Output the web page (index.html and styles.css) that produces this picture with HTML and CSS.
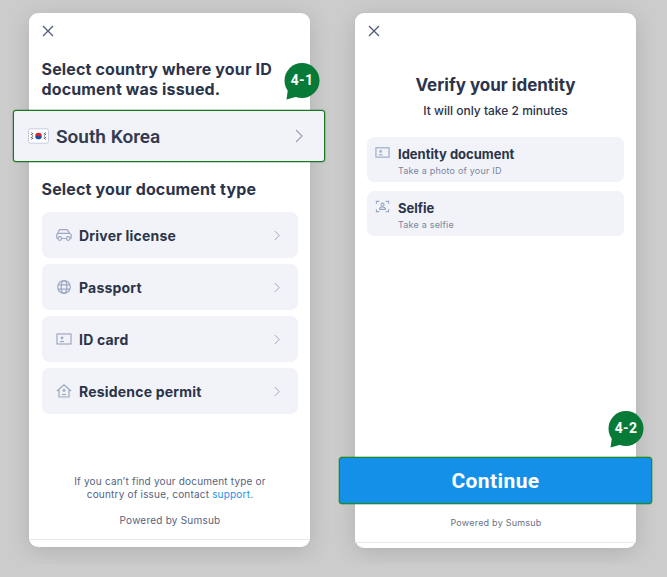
FILE: index.html
```html
<!DOCTYPE html>
<html lang="en">
<head>
    <meta charset="UTF-8">
    <meta name="viewport" content="width=device-width, initial-scale=1.0">
    <title>Verification steps</title>
    <link rel="stylesheet" href="styles.css">
</head>
<body>
    <main class="page">
        <section class="card card-left">
            <svg class="close" viewBox="0 0 12 12"><path d="M1 1l10 10M11 1L1 11"/></svg>
            <h2 class="heading">Select country where your ID document was issued.</h2>
            <div class="badge badge-one">
                <svg class="badge-shape" viewBox="0 0 36 37"><circle cx="18" cy="17.500" r="17.500"/><path d="M4 26L2.500 36.500 15 33z"/></svg>
                <span class="badge-text">4-1</span>
            </div>
            <div class="country">
                <svg class="flag" viewBox="0 0 22 16">
                    <rect x=".5" y=".5" width="21" height="15" rx="2" fill="#fff" stroke="#c3cbdc"/>
                    <path d="M7.500 8a3.500 3.500 0 0 1 7 0z" fill="#d8232f"/>
                    <path d="M7.500 8a3.500 3.500 0 0 0 7 0z" fill="#1c4fa0"/>
                    <path d="M3.500 4.500l2 1.500M3 6l2 1.500M16.500 6l2-1.500M17 7.500l2-1.500M3.500 11.500l2-1.500M3 10l2-1.500M16.500 10l2 1.500M17 8.500l2 1.500" stroke="#333a48" stroke-width=".9"/>
                </svg>
                <span class="country-name">South Korea</span>
                <svg class="chevron" viewBox="0 0 8 14"><path d="M1 1l6 6-6 6"/></svg>
            </div>
            <h2 class="heading heading-type">Select your document type</h2>
            <div class="doc-list">
                <div class="doc-row">
                    <svg class="icon" viewBox="0 0 16 16"><path d="M2 11.500H1.500C1 11.500.8 11.200.8 10.800V8c0-.8.4-1.300 1-1.600L3 3.500C3.200 3 3.700 2.700 4.200 2.700h6.300c.5 0 .9.200 1.200.6l2 3c.9.300 1.500.9 1.500 1.800v2.700c0 .4-.3.700-.7.700H14M5.600 11.500h4.800M2 6.300h12"/><circle cx="3.800" cy="11.500" r="1.800"/><circle cx="12.200" cy="11.500" r="1.800"/></svg>
                    <span class="doc-name">Driver license</span>
                    <svg class="chevron chevron-small" viewBox="0 0 8 14"><path d="M1 1l6 6-6 6"/></svg>
                </div>
                <div class="doc-row">
                    <svg class="icon" viewBox="0 0 16 16"><circle cx="8" cy="8" r="6.300"/><ellipse cx="8" cy="8" rx="2.800" ry="6.300"/><path d="M2 5.800h12M2 10.200h12"/></svg>
                    <span class="doc-name">Passport</span>
                    <svg class="chevron chevron-small" viewBox="0 0 8 14"><path d="M1 1l6 6-6 6"/></svg>
                </div>
                <div class="doc-row">
                    <svg class="icon" viewBox="0 0 16 16"><rect x="1" y="3" width="14" height="10"/><circle cx="6" cy="6.800" r=".8"/><path d="M4 10.500h4"/></svg>
                    <span class="doc-name">ID card</span>
                    <svg class="chevron chevron-small" viewBox="0 0 8 14"><path d="M1 1l6 6-6 6"/></svg>
                </div>
                <div class="doc-row">
                    <svg class="icon" viewBox="0 0 16 16"><path d="M1 8l7-6.200L15 8M3 6.500V14h10V6.500"/><circle cx="8" cy="7.500" r=".8"/><path d="M6 11.500h4"/></svg>
                    <span class="doc-name">Residence permit</span>
                    <svg class="chevron chevron-small" viewBox="0 0 8 14"><path d="M1 1l6 6-6 6"/></svg>
                </div>
            </div>
            <p class="help">If you can&rsquo;t find your document type or<br>country of issue, contact <a class="help-link">support</a>.</p>
            <p class="powered">Powered by Sumsub</p>
            <div class="card-foot"></div>
        </section>

        <section class="card card-right">
            <svg class="close" viewBox="0 0 12 12"><path d="M1 1l10 10M11 1L1 11"/></svg>
            <h1 class="title">Verify your identity</h1>
            <p class="subtitle">It will only take 2 minutes</p>
            <div class="step-list">
                <div class="step-row">
                    <svg class="icon icon-step" viewBox="0 0 16 16"><rect x="1" y="3" width="14" height="10"/><circle cx="6" cy="6.800" r=".8"/><path d="M4 10.500h4"/></svg>
                    <div>
                        <div class="step-name">Identity document</div>
                        <div class="step-note">Take a photo of your ID</div>
                    </div>
                </div>
                <div class="step-row">
                    <svg class="icon icon-step" viewBox="0 0 16 16"><path d="M1.500 5V2.500h3M11.500 2.500h3V5M14.500 11v2.500h-3M4.500 13.500h-3V11"/><circle cx="8" cy="6" r="1.600"/><path d="M4.800 11c0-1.700 1.400-2.500 3.200-2.500s3.200.8 3.200 2.500z"/></svg>
                    <div>
                        <div class="step-name">Selfie</div>
                        <div class="step-note">Take a selfie</div>
                    </div>
                </div>
            </div>
            <div class="badge badge-two">
                <svg class="badge-shape" viewBox="0 0 36 37"><circle cx="18" cy="17.500" r="17.500"/><path d="M4 26L2.500 36.500 15 33z"/></svg>
                <span class="badge-text">4-2</span>
            </div>
            <button class="continue">Continue</button>
            <p class="powered powered-right">Powered by Sumsub</p>
            <div class="card-foot card-foot-right"></div>
        </section>
    </main>
</body>
</html>
```

FILE: styles.css
```css
body {
    margin: 0;
    background-color: #cccccc;
    font-family: "Inter", "Liberation Sans", sans-serif;
    color: #2b344a;
}

.page {
    display: flex;
    gap: 45px;
    padding: 13px 0 0 29px;
    height: 564px;
    box-sizing: border-box;
}

.card {
    position: relative;
    display: flex;
    flex-direction: column;
    width: 281px;
    background-color: #fff;
    border-radius: 9px;
    box-shadow: 0 4px 22px rgba(0, 0, 0, 0.14);
    box-sizing: border-box;
}

.card-left {
    height: 534px;
    padding: 12px 12px 0;
}

.card-right {
    height: 535px;
    padding: 12px 12px 0;
}

.close {
    display: block;
    width: 12px;
    height: 12px;
    flex: none;
    fill: none;
    stroke: #4d5b78;
    stroke-width: 1.300;
    margin-left: 1px;
}

.heading {
    margin: 22px 0 0;
    padding-left: 0.5px;
    font-size: 16px;
    line-height: 20px;
    font-weight: 700;
    letter-spacing: 0.15px;
}

.heading-type {
    margin-top: 17px;
}

.country {
    display: flex;
    align-items: center;
    height: 52px;
    margin: 11px -27px 0 -28px;
    padding: 0 21px 0 14px;
    background-color: #f1f3f8;
    border: 1px solid #17781f;
    border-radius: 3px;
    box-shadow: 0 0 0 0.5px rgba(23, 120, 31, 0.5);
    box-sizing: border-box;
    position: relative;
}

.flag {
    width: 21px;
    height: 16px;
    flex: none;
}

.country-name {
    margin-left: 7px;
    font-family: "Roboto", sans-serif;
    font-size: 19px;
    font-weight: 600;
    flex: 1;
    color: #333b50;
}

.chevron {
    width: 8px;
    height: 14px;
    flex: none;
    fill: none;
    stroke: #98a4bd;
    stroke-width: 1.200;
}

.chevron-small {
    width: 6px;
    height: 11px;
}

.doc-list {
    display: flex;
    flex-direction: column;
    gap: 6px;
    margin: 13px 0 0 1px;
    width: 256px;
}

.doc-row {
    display: flex;
    align-items: center;
    height: 46px;
    padding: 0 18px 0 14px;
    background-color: #f2f3f8;
    border-radius: 7px;
    box-sizing: border-box;
}

.icon {
    width: 16px;
    height: 16px;
    flex: none;
    fill: none;
    stroke: #9ba8c2;
    stroke-width: 1.200;
}

.doc-name {
    flex: 1;
    margin-left: 7px;
    font-size: 14px;
    font-weight: 700;
    letter-spacing: 0.2px;
}

.help {
    margin: auto 0 0;
    padding-left: 1px;
    font-size: 10px;
    line-height: 13px;
    letter-spacing: 0.19px;
    text-align: center;
    color: #566380;
}

.help-link {
    color: #1a92e8;
}

.powered {
    margin: 13px 0 0;
    padding-left: 1px;
    font-size: 10px;
    line-height: 13px;
    letter-spacing: 0.22px;
    text-align: center;
    color: #566380;
}

.card-foot {
    height: 7px;
    margin: 12px -12px 0;
    border-top: 1px solid #e8e9ee;
    flex: none;
}

.card-foot-right {
    height: 5px;
    margin-top: 13px;
}

.title {
    margin: 36px 0 0;
    font-size: 17px;
    line-height: 24px;
    font-weight: 700;
    text-align: center;
}

.subtitle {
    margin: 6px 0 0;
    font-size: 12px;
    line-height: 16px;
    font-weight: 500;
    text-align: center;
}

.step-list {
    display: flex;
    flex-direction: column;
    gap: 9px;
    margin-top: 18px;
}

.step-row {
    display: flex;
    align-items: flex-start;
    height: 45px;
    padding: 9px 10px 0 8px;
    background-color: #f2f3f8;
    border-radius: 7px;
    box-sizing: border-box;
}

.icon-step {
    width: 15px;
    height: 15px;
    margin: -1px 8px 0 0;
}

.step-name {
    font-size: 13px;
    line-height: 17px;
    font-weight: 700;
}

.step-note {
    margin-top: 2px;
    font-size: 9px;
    line-height: 12px;
    letter-spacing: 0.2px;
    color: #7985a0;
}

.continue {
    display: block;
    flex: none;
    height: 47px;
    margin: auto -28px 0;
    background-color: #1590e9;
    border: 1px solid #1c8a2a;
    border-radius: 3px;
    box-shadow: 0 0 0 0.5px rgba(28, 138, 42, 0.6);
    color: #fff;
    font-family: "Roboto", sans-serif;
    font-size: 21px;
    font-weight: 700;
    letter-spacing: 0.4px;
}

.powered-right {
    margin-top: 12px;
    font-size: 9px;
    color: #6a7288;
}

/* callout badges sit over the card edge */
.badge {
    position: absolute;
    width: 36px;
    height: 37px;
}

.badge-one {
    left: 255px;
    top: 50px;
}

.badge-two {
    left: 253px;
    top: 398px;
}

.badge-shape {
    position: absolute;
    inset: 0;
    fill: #077a38;
}

.badge-text {
    position: absolute;
    left: 0;
    right: 0;
    top: 9px;
    font-family: "Roboto", sans-serif;
    font-size: 14px;
    line-height: 17px;
    font-weight: 700;
    letter-spacing: 0.3px;
    text-align: center;
    color: #fff;
}
```
